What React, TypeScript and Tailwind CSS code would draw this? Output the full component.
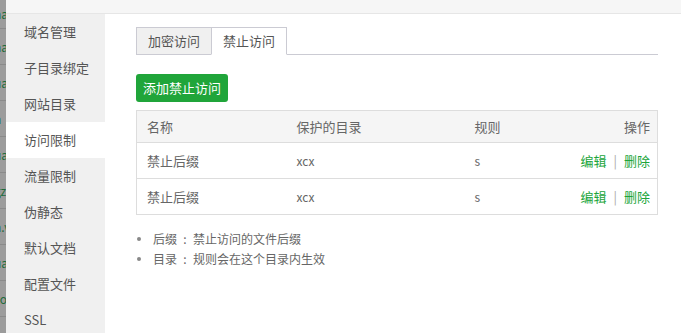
import { useState } from "react";

const font = { fontFamily: '"Microsoft YaHei", "Noto Sans CJK SC", "Noto Sans", sans-serif' };

const menu = ["域名管理", "子目录绑定", "网站目录", "访问限制", "流量限制", "伪静态", "默认文档", "配置文件", "SSL"];

const rules = [
  { name: "禁止后缀", dir: "xcx", rule: "s" },
  { name: "禁止后缀", dir: "xcx", rule: "s" },
];

const tips = [
  ["后缀", "禁止访问的文件后缀"],
  ["目录", "规则会在这个目录内生效"],
];

// the page behind the dialog, only a sliver of it shows
const behind = ["na", "na", "ua", "h", "ua", "gz", "n.v", "ua", "co", "ua"];

export default function App() {
  const [active, setActive] = useState(3);
  const [tab, setTab] = useState(1);

  return (
    <div className="flex h-[333px] w-[681px] overflow-hidden bg-white text-[13px]" style={font}>
      <div className="w-[6px] shrink-0 overflow-hidden bg-[#9c9c9c]">
        {behind.map((t, i) => (
          <div
            key={i}
            className="flex h-9 items-center border-b border-[#8a8a8a] text-[12px] leading-none text-[#1f6b3a] first:h-[29px]"
          >
            <span className="-ml-[6px]">{t}</span>
          </div>
        ))}
      </div>

      <div className="flex min-w-0 flex-1 flex-col">
        <div className="h-[14px] shrink-0 border-b border-[#e6e6e6] bg-[#f6f6f6]" />

        <div className="flex flex-1">
          <ul className="w-[99px] shrink-0 bg-[#f0f0f0]">
            {menu.map((m, i) => (
              <li
                key={m}
                onClick={() => setActive(i)}
                className={`flex h-9 cursor-pointer items-center pl-[18px] text-[#555] ${
                  i === active ? "bg-white" : ""
                }`}
              >
                {m}
              </li>
            ))}
          </ul>

          <div className="flex-1 pl-[31px] pr-[23px] pt-[13px]">
            <div className="flex border-b border-[#cbcbd3]">
              {["加密访问", "禁止访问"].map((t, i) => (
                <button
                  key={t}
                  onClick={() => setTab(i)}
                  className={`-mb-px h-[28px] w-[76px] border border-[#cbcbd3] text-[#555] ${
                    i === tab ? "border-b-white bg-white" : "bg-[#f0f0f0]"
                  } ${i === 1 ? "-ml-px" : ""}`}
                >
                  {t}
                </button>
              ))}
            </div>

            <button className="mt-[19px] h-[28px] rounded-[3px] bg-[#20a53a] px-[7px] text-white">
              添加禁止访问
            </button>

            <table className="mt-2 w-full table-fixed border-collapse border border-[#ddd] text-left">
              <colgroup>
                <col className="w-[150px]" />
                <col className="w-[178px]" />
                <col className="w-[100px]" />
                <col />
              </colgroup>
              <thead>
                <tr className="h-[32px] bg-[#f5f5f5] text-[#666]">
                  <th className="px-[10px] font-normal">名称</th>
                  <th className="px-[10px] font-normal">保护的目录</th>
                  <th className="px-[10px] font-normal">规则</th>
                  <th className="px-[7px] text-right font-normal">操作</th>
                </tr>
              </thead>
              <tbody>
                {rules.map((r, i) => (
                  <tr key={i} className="h-[36px] border-t border-[#ddd] text-[#666]">
                    <td className="px-[10px]">{r.name}</td>
                    <td className="px-[10px] text-[12px]">{r.dir}</td>
                    <td className="px-[10px] text-[12px]">{r.rule}</td>
                    <td className="px-[7px] text-right">
                      <a className="text-[#20a53a]">编辑</a>
                      <span className="mx-[7px] text-[#aaa]">|</span>
                      <a className="text-[#20a53a]">删除</a>
                    </td>
                  </tr>
                ))}
              </tbody>
            </table>

            <ul className="mt-[15px] space-y-[2px] text-[12px] leading-[18px] text-[#666]">
              {tips.map(([k, v]) => (
                <li key={k} className="flex items-center">
                  <span className="ml-[1px] mr-[12px] h-[4px] w-[4px] rounded-full bg-[#888]" />
                  {k}
                  <span className="inline-block w-[16px] text-center">:</span>
                  {v}
                </li>
              ))}
            </ul>
          </div>
        </div>
      </div>
    </div>
  );
}
